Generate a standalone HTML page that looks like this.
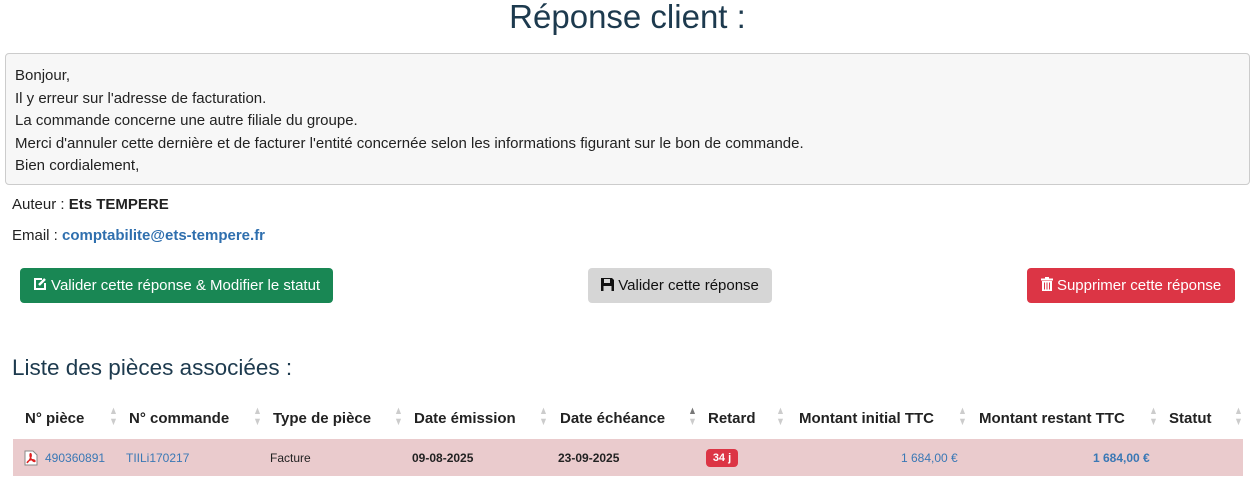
<!DOCTYPE html><html><head><meta charset="utf-8"><style>
body{margin:0;width:1255px;height:481px;overflow:hidden;background:#fff;font-family:"Liberation Sans",Arial,sans-serif;color:#222;position:relative}
.a{position:absolute;white-space:nowrap}
h1{position:absolute;top:-2px;left:0;width:1255px;text-align:center;margin:0;font-weight:normal;font-size:33px;color:#1d3a4e}
.box{position:absolute;left:5px;top:53px;width:1245px;height:132px;background:#f7f7f7;border:1px solid #ccc;border-radius:4px;font-size:15px;line-height:22.5px;padding:11px 9px;box-sizing:border-box}
.btn{position:absolute;top:268px;height:35px;border-radius:4px;font-size:15px;line-height:35px;text-align:center;box-sizing:border-box}
.th{position:absolute;top:410px;font-weight:bold;font-size:15px}
.s{position:absolute;top:406px;font-size:11px;color:#ccc;line-height:11px;transform:scaleX(0.8)}
.td{position:absolute;top:451px;font-size:12px}
.lk{color:#3a78b5}
</style></head><body>
<h1>Réponse client :</h1>
<div class="box">Bonjour,<br>Il y erreur sur l'adresse de facturation.<br>La commande concerne une autre filiale du groupe.<br>Merci d'annuler cette dernière et de facturer l'entité concernée selon les informations figurant sur le bon de commande.<br>Bien cordialement,</div>
<div class="a" style="left:12px;top:196px;font-size:15px">Auteur : <b>Ets TEMPERE</b></div>
<div class="a" style="left:12px;top:227px;font-size:15px">Email : <b class="lk" style="color:#2f6fae">comptabilite@ets-tempere.fr</b></div>
<div class="btn" style="left:20px;width:313px;background:#198754;color:#fff">
<svg width="14" height="14" viewBox="0 0 14 14" style="vertical-align:-1px"><path d="M9 2H2v10h10V6" fill="none" stroke="#fff" stroke-width="2"/><path d="M6 8l6-6" stroke="#fff" stroke-width="2.5"/></svg> Valider cette réponse &amp; Modifier le statut</div>
<div class="btn" style="left:588px;width:184px;background:#d6d6d6;color:#111">
<svg width="13" height="13" viewBox="0 0 13 13" style="vertical-align:-1px"><path d="M0 0h11l2 2v11H0z" fill="#111"/><rect x="3" y="1" width="6" height="4" fill="#d6d6d6"/><rect x="2.5" y="8" width="8" height="5" fill="#d6d6d6"/></svg> Valider cette réponse</div>
<div class="btn" style="left:1027px;width:208px;background:#dc3545;color:#fff">
<svg width="12" height="14" viewBox="0 0 12 14" style="vertical-align:-1px"><rect x="0" y="1.5" width="12" height="2" fill="#fff"/><rect x="4" y="0" width="4" height="2" fill="#fff"/><path d="M1 4h10v10H1z" fill="#fff"/><path d="M3.5 5.5v7M6 5.5v7M8.5 5.5v7" stroke="#dc3545" stroke-width="1"/></svg> Supprimer cette réponse</div>
<div class="a" style="left:12px;top:355px;font-size:22.5px;color:#1d3a4e">Liste des pièces associées :</div>
<div class="th" style="left:25px">N° pièce</div><div class="s" style="left:108px">▲<br>▼</div>
<div class="th" style="left:129px">N° commande</div><div class="s" style="left:252px">▲<br>▼</div>
<div class="th" style="left:273px">Type de pièce</div><div class="s" style="left:393px">▲<br>▼</div>
<div class="th" style="left:414px">Date émission</div><div class="s" style="left:538px">▲<br>▼</div>
<div class="th" style="left:560px">Date échéance</div><div class="s" style="left:687px;color:#777">▲<br><span style="color:#ccc">▼</span></div>
<div class="th" style="left:708px">Retard</div><div class="s" style="left:775px">▲<br>▼</div>
<div class="th" style="left:799px">Montant initial TTC</div><div class="s" style="left:957px">▲<br>▼</div>
<div class="th" style="left:979px">Montant restant TTC</div><div class="s" style="left:1148px">▲<br>▼</div>
<div class="th" style="left:1169px">Statut</div><div class="s" style="left:1233px">▲<br>▼</div>
<div class="a" style="left:13px;top:439px;width:1230px;height:37px;background:#eacbcd"></div>
<svg class="a" style="left:24px;top:450px" width="14" height="16" viewBox="0 0 14 16"><path d="M1 1h8l4 4v10H1z" fill="#fff" stroke="#888"/><path d="M3 13c3-3 5-7 4-9s-2 3 1 6 4 1 2 0-6 0-7 3" fill="none" stroke="#d22" stroke-width="1.3"/></svg>
<div class="td lk" style="left:45px">490360891</div>
<div class="td lk" style="left:126px">TIILi170217</div>
<div class="td" style="left:270px">Facture</div>
<div class="td" style="left:412px;font-weight:bold">09-08-2025</div>
<div class="td" style="left:558px;font-weight:bold">23-09-2025</div>
<div class="a" style="left:706px;top:449px;width:32px;height:18px;background:#dc3545;border-radius:4px;color:#fff;font-size:11px;font-weight:bold;text-align:center;line-height:18px">34 j</div>
<div class="td lk" style="left:901px">1 684,00 €</div>
<div class="td lk" style="left:1093px;font-weight:bold">1 684,00 €</div>
</body></html>
